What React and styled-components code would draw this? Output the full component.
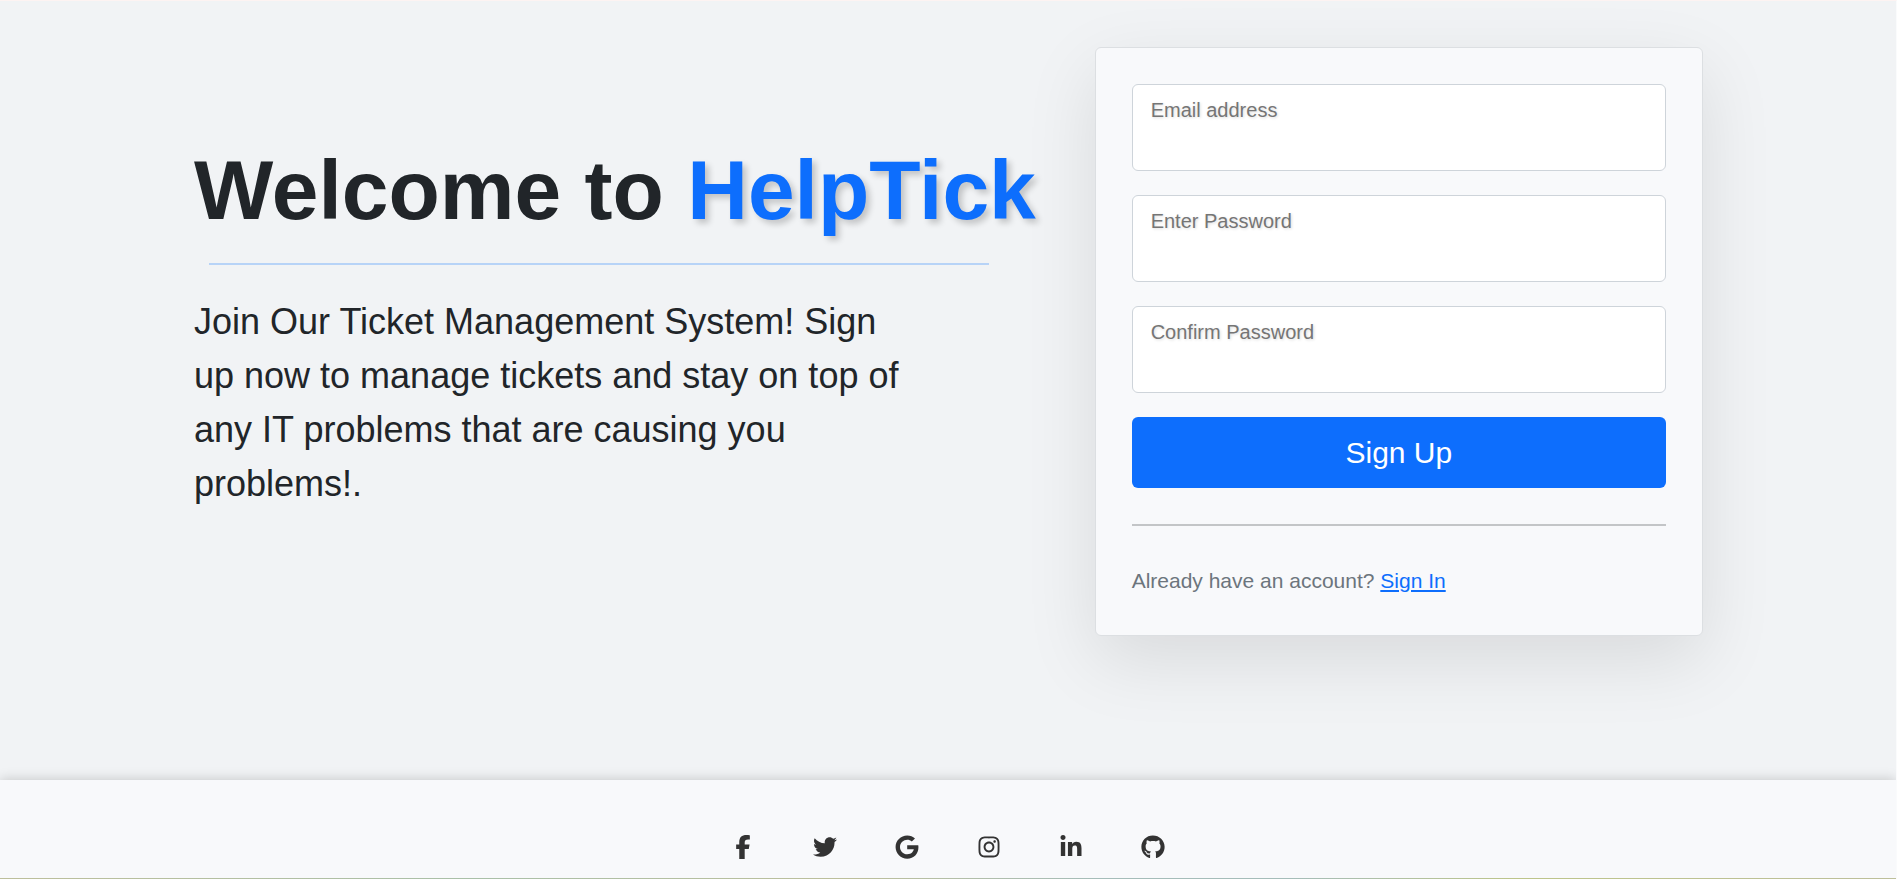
import React from "react";
import styled, { createGlobalStyle } from "styled-components";
import {
  FaTwitter,
  FaGoogle,
  FaInstagram,
  FaLinkedinIn,
  FaGithub,
} from "react-icons/fa";
import { FaFacebookF } from "react-icons/fa6";

const GlobalStyle = createGlobalStyle`
  *, *::before, *::after { box-sizing: border-box; }
  body {
    margin: 0;
    background: #f1f3f5;
    color: #212529;
    font-family: "Liberation Sans", Arial, sans-serif;
    font-size: 20px;
    line-height: 30px;
  }
`;

const Page = styled.div`
  min-height: 100vh;
  display: flex;
  flex-direction: column;
  overflow: hidden;
  border-top: 1px solid #fdf3f2;
  border-right: 1px solid #fafbfc;
`;

const Hero = styled.main`
  flex: 1;
  width: 100%;
  max-width: 1584px;
  margin: 0 auto;
  padding: 46px 37px 144px 38px;
  display: grid;
  grid-template-columns: minmax(0, 7fr) minmax(0, 5fr);
  column-gap: 49px;
  align-items: start;
`;

const Intro = styled.section`
  padding-top: 92px;
`;

const Title = styled.h1`
  margin: 0;
  font-size: 84px;
  line-height: 102px;
  font-weight: 700;
  white-space: nowrap;
`;

const Brand = styled.span`
  color: #0d6efd;
  text-shadow: 4px 4px 6px rgba(0, 0, 0, 0.2);
`;

const Rule = styled.hr`
  height: 2px;
  margin: ${(p) => (p.$brand ? "22px 57px 30px 15px" : "36px 0")};
  border: 0;
  background: ${(p) => (p.$brand ? "#b7d3f7" : "#c3c5c7")};
`;

const Lead = styled.p`
  max-width: 720px;
  margin: 0;
  font-size: 36px;
  line-height: 54px;
`;

const Card = styled.form`
  padding: 36px;
  border: 1px solid #dcdfe2;
  border-radius: 6px;
  background: #f8f9fb;
  box-shadow: 0 24px 72px rgba(0, 0, 0, 0.1);
`;

const Field = styled.input`
  display: block;
  width: 100%;
  height: 87px;
  margin-bottom: 24px;
  padding: 0 18px 34px;
  border: 1px solid #ced4da;
  border-radius: 6px;
  background: #fff;
  color: #212529;
  font: inherit;
  text-shadow: 1px 1px 3px rgba(0, 0, 0, 0.15);

  &::placeholder { color: #757575; opacity: 1; }
`;

const Submit = styled.button`
  display: block;
  width: 100%;
  padding: 13px 24px;
  border: 0;
  border-radius: 6px;
  background: #0d6efd;
  color: #fff;
  font: inherit;
  font-size: 30px;
  line-height: 45px;
`;

const Note = styled.p`
  margin: 0;
  padding: 4px 0 3px;
  color: #6c757d;
  font-size: 21px;

  a { color: #0d6efd; }
`;

const Footer = styled.footer`
  background: #f8f9fb;
  box-shadow: 0 0 12px rgba(0, 0, 0, 0.2);

  &::after {
    content: "";
    display: block;
    height: 1px;
    background: linear-gradient(90deg, #bdbf9b, #a9c0a8 25%, #bdbf9b 45%, #a5bdb9 58%, #a5bdb9 68%, #bdc58a 80%, #bdbf9b);
  }
`;

const Social = styled.nav`
  display: flex;
  justify-content: center;
  gap: 58px;
  padding: 55px 24px 19px;
`;

const SocialLink = styled.a`
  display: flex;
  color: #333;
  font-size: 24px;

  svg { width: auto; height: 24px; }
`;

const fields = [
  { label: "Email address", type: "email" },
  { label: "Enter Password", type: "password" },
  { label: "Confirm Password", type: "password" },
];

const links = [
  { name: "Facebook", Icon: FaFacebookF },
  { name: "Twitter", Icon: FaTwitter },
  { name: "Google", Icon: FaGoogle },
  { name: "Instagram", Icon: FaInstagram },
  { name: "LinkedIn", Icon: FaLinkedinIn },
  { name: "GitHub", Icon: FaGithub },
];

export default function App() {
  return (
    <>
      <GlobalStyle />
      <Page>
        <Hero>
          <Intro>
            <Title>
              Welcome to <Brand>HelpTick</Brand>
            </Title>
            <Rule $brand />
            <Lead>
              Join Our Ticket Management System! Sign up now to manage tickets
              and stay on top of any IT problems that are causing you
              problems!.
            </Lead>
          </Intro>
          <Card onSubmit={(e) => e.preventDefault()}>
            {fields.map((f) => (
              <Field
                key={f.label}
                type={f.type}
                placeholder={f.label}
                aria-label={f.label}
              />
            ))}
            <Submit type="submit">Sign Up</Submit>
            <Rule />
            <Note>
              Already have an account? <a href="#signin">Sign In</a>
            </Note>
          </Card>
        </Hero>
        <Footer>
          <Social aria-label="Social media">
            {links.map(({ name, Icon }) => (
              <SocialLink key={name} href={`#${name.toLowerCase()}`} aria-label={name}>
                <Icon />
              </SocialLink>
            ))}
          </Social>
        </Footer>
      </Page>
    </>
  );
}
